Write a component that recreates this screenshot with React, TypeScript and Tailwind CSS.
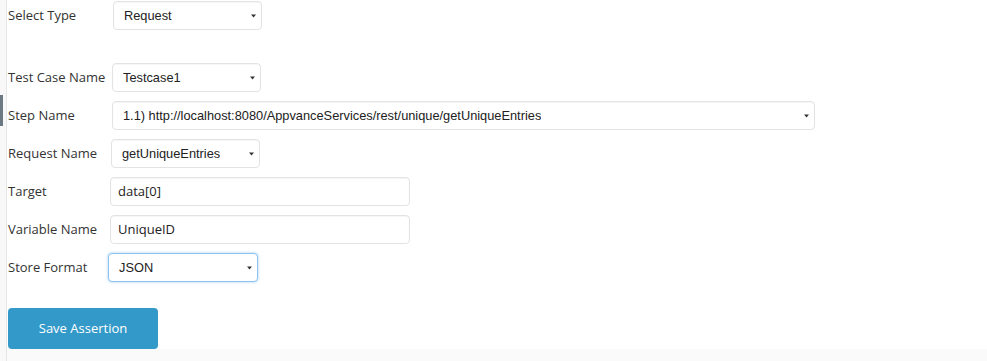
import React from "react";

const labelFont = { fontFamily: '"Open Sans", "Liberation Sans", sans-serif' };

const Caret = () => (
  <svg width="5" height="4" viewBox="0 0 5 4" className="shrink-0">
    <path d="M0 0.5 H5 L2.5 3.5 Z" fill="#333" />
  </svg>
);

const SelectBox = ({ value, width, focus }: { value: string; width: string; focus?: boolean }) => (
  <div
    className={`flex items-center justify-between h-[29px] ${width} rounded-[4px] border bg-white pl-[10px] pr-[5px] text-[12.8px] text-[#222] ${
      focus
        ? "border-[#8cc3ef] shadow-[0_0_3px_rgba(102,175,233,0.6)]"
        : "border-[#e3e3e3] shadow-[inset_0_1px_1px_rgba(0,0,0,0.04)]"
    }`}
    style={{ fontFamily: '"Liberation Sans", Arial, sans-serif' }}>
    <span className="truncate">{value}</span>
    <Caret />
  </div>
);

const TextBox = ({ value }: { value: string }) => (
  <div
    className="flex items-center h-[29px] w-[300px] rounded-[4px] border border-[#e3e3e3] bg-white pl-[7px] text-[13px] text-[#222] shadow-[inset_0_1px_1px_rgba(0,0,0,0.04)]"
    style={labelFont}>
    {value}
  </div>
);

const Row = ({ label, labelW, children }: { label: string; labelW: string; children: React.ReactNode }) => (
  <div className="flex items-center h-[29px]">
    <div className={`${labelW} shrink-0 text-[13px] text-[#333]`} style={labelFont}>
      {label}
    </div>
    {children}
  </div>
);

export default function App() {
  return (
    <div className="flex w-[987px] h-[361px] bg-white overflow-hidden">
      {/* left strip */}
      <div className="w-[7px] shrink-0 bg-[#f8f8f8] border-r border-[#e6e6e6] flex flex-col">
        <div className="h-[95px]" />
        <div className="h-[31px] w-[3px] bg-[#6d7885]" />
      </div>

      <div className="flex-1 flex flex-col">
        <div className="flex-1 flex flex-col pt-[1px] pl-[1px]">
          <Row label="Select Type" labelW="w-[105px]">
            <SelectBox value="Request" width="w-[149px]" />
          </Row>
          <div className="h-[33px]" />
          <div className="flex flex-col gap-[9px]">
            <Row label="Test Case Name" labelW="w-[104px]">
              <SelectBox value="Testcase1" width="w-[149px]" />
            </Row>
            <Row label="Step Name" labelW="w-[104px]">
              <SelectBox
                value="1.1) http://localhost:8080/AppvanceServices/rest/unique/getUniqueEntries"
                width="w-[703px]"
              />
            </Row>
            <Row label="Request Name" labelW="w-[103px]">
              <SelectBox value="getUniqueEntries" width="w-[149px]" />
            </Row>
            <Row label="Target" labelW="w-[102px]">
              <TextBox value="data[0]" />
            </Row>
            <Row label="Variable Name" labelW="w-[102px]">
              <TextBox value="UniqueID" />
            </Row>
            <Row label="Store Format" labelW="w-[100px]">
              <SelectBox value="JSON" width="w-[150px]" focus />
            </Row>
          </div>
          <div className="h-[26px]" />
          <button
            className="w-[150px] h-[41px] rounded-[4px] bg-[#3399c9] text-white text-[13px]"
            style={labelFont}>
            Save Assertion
          </button>
        </div>
        <div className="h-[13px] bg-[#fafafa]" />
      </div>
    </div>
  );
}
